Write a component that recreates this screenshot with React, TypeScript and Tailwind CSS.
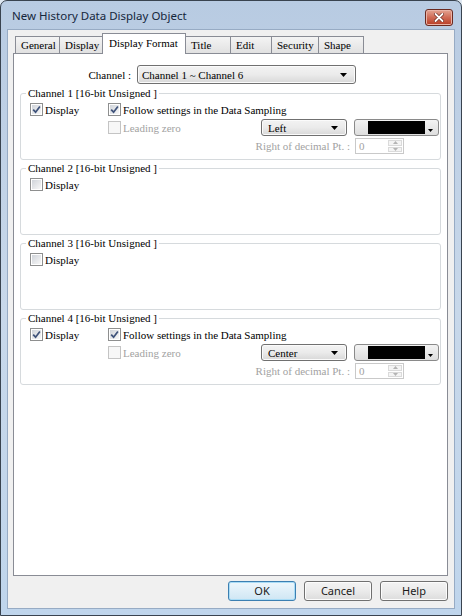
import React from "react";

const serif = "[font-family:'Liberation_Serif','Times_New_Roman',serif] text-[11px] leading-[12px] text-black";
const sans = "[font-family:'Noto_Sans','Liberation_Sans',sans-serif]";

function DropArrow() {
  return (
    <svg width="7" height="4" viewBox="0 0 7 4" className="shrink-0">
      <path d="M0 0 H7 L3.5 4 Z" fill="#000" />
    </svg>
  );
}

function CheckBox({ checked = false, disabled = false }: { checked?: boolean; disabled?: boolean }) {
  return (
    <span
      className={
        disabled
          ? "flex h-[13px] w-[13px] shrink-0 items-center justify-center border border-[#c4c4c4] bg-[#f7f7f7]"
          : "flex h-[13px] w-[13px] shrink-0 items-center justify-center border border-[#8e8f8f] bg-white p-[1px]"
      }
    >
      {!disabled && (
        <span className="flex h-full w-full items-center justify-center bg-gradient-to-br from-[#d0d4da] to-[#f8f8f8]">
          {checked && (
            <svg width="9" height="9" viewBox="0 0 9 9">
              <path d="M1.2 4.6 L3.6 7.2 L7.9 1.4" stroke="#3e527a" strokeWidth="1.7" fill="none" />
            </svg>
          )}
        </span>
      )}
    </span>
  );
}

function CheckItem({
  label,
  checked = false,
  disabled = false,
  className = "",
}: {
  label: string;
  checked?: boolean;
  disabled?: boolean;
  className?: string;
}) {
  return (
    <div className={`flex items-center ${className}`}>
      <CheckBox checked={checked} disabled={disabled} />
      <span className={disabled ? "ml-[2px] whitespace-nowrap text-[#a2a2a2]" : "ml-[2px] whitespace-nowrap"}>{label}</span>
    </div>
  );
}

function AlignCombo({ value }: { value: string }) {
  return (
    <div className="flex h-[17px] w-[86px] items-center justify-between rounded-[3px] border border-[#707070] bg-gradient-to-b from-[#f3f3f3] via-[#ebebeb] to-[#d8d8d8] pl-[6px] pr-[8px] shadow-[inset_0_0_0_1px_#fbfbfb]">
      <span>{value}</span>
      <DropArrow />
    </div>
  );
}

function ColorCombo() {
  return (
    <div className="flex h-[17px] w-[85px] items-center rounded-[3px] border border-[#8a8a8a] bg-gradient-to-b from-[#f3f3f3] to-[#dedede] pl-[13px] pr-[2px]">
      <span className="h-[13px] flex-1 bg-black" />
      <span className="flex h-full w-[11px] items-end justify-center pb-[3px]">
        <svg width="5" height="3" viewBox="0 0 5 3">
          <path d="M0 0 H5 L2.5 3 Z" fill="#000" />
        </svg>
      </span>
    </div>
  );
}

function SpinBox() {
  return (
    <div className="flex h-[16px] w-[49px] items-stretch border border-[#c9c9c9] bg-white">
      <span className="flex-1 pl-[3px] pt-[1px] text-[#a2a2a2]">0</span>
      <div className="flex w-[15px] flex-col gap-[1px] py-[1px] pr-[1px]">
        <span className="flex flex-1 items-center justify-center border border-[#dadada] bg-[#f4f4f4]">
          <svg width="5" height="3" viewBox="0 0 5 3">
            <path d="M0 3 H5 L2.5 0 Z" fill="#b4b4b4" />
          </svg>
        </span>
        <span className="flex flex-1 items-center justify-center border border-[#dadada] bg-[#f4f4f4]">
          <svg width="5" height="3" viewBox="0 0 5 3">
            <path d="M0 0 H5 L2.5 3 Z" fill="#b4b4b4" />
          </svg>
        </span>
      </div>
    </div>
  );
}

function ChannelGroup({ index, enabled, align }: { index: number; enabled: boolean; align?: string }) {
  return (
    <fieldset className="h-[73px] rounded-[3px] border border-[#d6dadd]">
      <legend className="ml-[5px] px-[2px] leading-[12px]">{`Channel ${index} [16-bit Unsigned ]`}</legend>
      <div className="pl-[9px] pt-[4px]">
        <div className="flex h-[13px] items-center">
          <CheckItem label="Display" checked={enabled} className="w-[78px]" />
          {enabled && <CheckItem label="Follow settings in the Data Sampling" checked />}
        </div>
        {enabled && (
          <>
            <div className="mt-[3px] flex items-start">
              <div className="w-[78px] shrink-0" />
              <CheckItem label="Leading zero" disabled className="mt-[2px] w-[153px] shrink-0" />
              <AlignCombo value={align ?? "Left"} />
              <div className="ml-[7px]">
                <ColorCombo />
              </div>
            </div>
            <div className="mt-[2px] flex items-center justify-end pr-[36px]">
              <span className="text-[#a2a2a2]">Right of decimal Pt. :</span>
              <div className="ml-[5px]">
                <SpinBox />
              </div>
            </div>
          </>
        )}
      </div>
    </fieldset>
  );
}

const tabs: { label: string; w: string; active?: boolean }[] = [
  { label: "General", w: "w-[45px]" },
  { label: "Display", w: "w-[44px]" },
  { label: "Display Format", w: "w-[84px]", active: true },
  { label: "Title", w: "w-[46px]" },
  { label: "Edit", w: "w-[42px]" },
  { label: "Security", w: "w-[48px]" },
  { label: "Shape", w: "w-[46px]" },
];

function DialogButton({ label, primary = false }: { label: string; primary?: boolean }) {
  return (
    <div
      className={
        primary
          ? "flex h-[20px] w-[68px] items-center justify-center rounded-[3px] border border-[#3c7fb1] bg-gradient-to-b from-[#eef7fc] to-[#cfe6f4] shadow-[inset_0_0_0_1px_#a9dcf6]"
          : "flex h-[20px] w-[68px] items-center justify-center rounded-[3px] border border-[#707070] bg-gradient-to-b from-[#f3f3f3] via-[#ebebeb] to-[#dcdcdc] shadow-[inset_0_0_0_1px_#fcfcfc]"
      }
    >
      <span className={`${sans} text-[11px] leading-[14px] text-[#1a1a1a]`}>{label}</span>
    </div>
  );
}

export default function App() {
  return (
    <div className="h-[616px] w-[462px] overflow-hidden bg-[#dfe8f2]">
      <div className="flex h-full w-full flex-col rounded-t-[7px] border border-[#39434f] bg-gradient-to-b from-[#b8cbe2] via-[#c8d8ea] to-[#bfd5ec]">
        {/* caption bar */}
        <div className="flex h-[28px] shrink-0 items-start justify-between pl-[11px] pr-[8px]">
          <span className={`mt-[8px] ${sans} text-[11.5px] leading-[14px] text-[#15263b]`}>
            New History Data Display Object
          </span>
          <div className="mt-[8px] flex h-[17px] w-[28px] items-center justify-center rounded-[3px] border border-[#6b2a20] bg-gradient-to-b from-[#e3a493] via-[#cf6a55] to-[#b73c25] shadow-[inset_0_0_0_1px_#eab3a6]">
            <svg width="10" height="9" viewBox="0 0 10 9">
              <path d="M1.5 1 L8.5 8 M8.5 1 L1.5 8" stroke="#6b2a20" strokeWidth="3.2" strokeLinecap="round" />
              <path d="M1.5 1 L8.5 8 M8.5 1 L1.5 8" stroke="#ffffff" strokeWidth="1.8" strokeLinecap="round" />
            </svg>
          </div>
        </div>

        {/* client area */}
        <div className={`mx-[6px] mb-[6px] flex flex-col border border-[#97abc4] bg-[#f0f0f0] pb-[7px] pl-[5px] pr-[6px] pt-[3px] ${serif}`}>
          {/* tab strip */}
          <div className="flex h-[20px] items-end pl-[2px]">
            {tabs.map((t) =>
              t.active ? (
                <div
                  key={t.label}
                  className={`relative z-10 -mb-[1px] -ml-[1px] h-[21px] ${t.w} border border-b-0 border-[#898c95] bg-white pl-[6px] pt-[3px]`}
                >
                  {t.label}
                </div>
              ) : (
                <div
                  key={t.label}
                  className={`-ml-[1px] h-[17px] first:ml-0 ${t.w} border border-b-0 border-[#898c95] bg-gradient-to-b from-[#f4f4f4] to-[#e1e1e1] pl-[5px] pt-[2px]`}
                >
                  {t.label}
                </div>
              )
            )}
          </div>

          {/* tab page */}
          <div className="h-[523px] border border-[#898c95] bg-white px-[6px] pt-[11px]">
            <div className="flex h-[19px] items-center">
              <div className="w-[111px] text-right">Channel :</div>
              <div className="ml-[6px] flex h-[19px] w-[219px] items-center justify-between rounded-[3px] border border-[#707070] bg-gradient-to-b from-[#f3f3f3] via-[#ebebeb] to-[#d8d8d8] pl-[4px] pr-[8px] shadow-[inset_0_0_0_1px_#fbfbfb]">
                <span>Channel 1 ~ Channel 6</span>
                <DropArrow />
              </div>
            </div>

            <div className="mt-[3px] flex flex-col gap-[2px]">
              <ChannelGroup index={1} enabled align="Left" />
              <ChannelGroup index={2} enabled={false} />
              <ChannelGroup index={3} enabled={false} />
              <ChannelGroup index={4} enabled align="Center" />
            </div>
          </div>

          {/* dialog buttons */}
          <div className="mt-[5px] flex justify-end gap-[8px]">
            <DialogButton label="OK" primary />
            <DialogButton label="Cancel" />
            <DialogButton label="Help" />
          </div>
        </div>
      </div>
    </div>
  );
}
